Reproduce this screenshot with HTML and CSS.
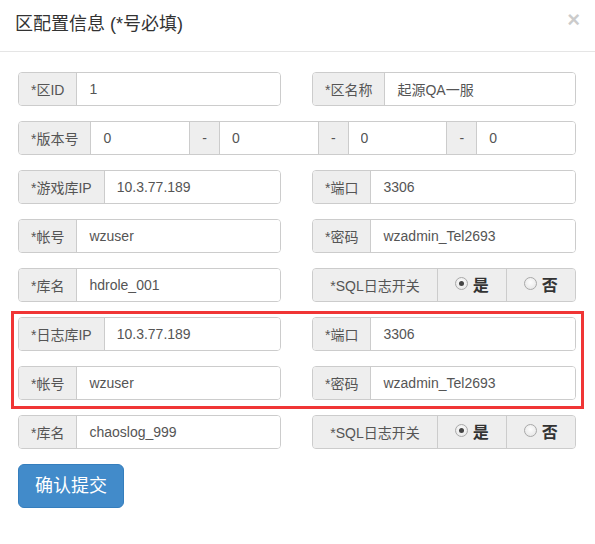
FILE: index.html
```html
<!DOCTYPE html>
<html lang="zh-CN">
<head>
<meta charset="utf-8">
<title>区配置信息</title>
<link rel="stylesheet" href="styles.css">
</head>
<body>
<div class="modal">
  <div class="modal-header">
    <h4 class="modal-title">区配置信息 (*号必填)</h4>
    <span class="close">×</span>
  </div>
  <div class="modal-body">
    <div class="form-grid">
      <div class="ig"><span class="addon">*区ID</span><input class="fc" value="1"></div>
      <div class="ig"><span class="addon">*区名称</span><input class="fc" value="起源QA一服"></div>

      <div class="ig wide">
        <span class="addon">*版本号</span><input class="fc" value="0">
        <span class="addon mid">-</span><input class="fc" value="0">
        <span class="addon mid">-</span><input class="fc" value="0">
        <span class="addon mid">-</span><input class="fc" value="0">
      </div>

      <div class="ig"><span class="addon">*游戏库IP</span><input class="fc" value="10.3.77.189"></div>
      <div class="ig"><span class="addon">*端口</span><input class="fc" value="3306"></div>

      <div class="ig"><span class="addon">*帐号</span><input class="fc" value="wzuser"></div>
      <div class="ig"><span class="addon">*密码</span><input class="fc" value="wzadmin_Tel2693"></div>

      <div class="ig"><span class="addon">*库名</span><input class="fc" value="hdrole_001"></div>
      <div class="ig radios">
        <span class="addon center">*SQL日志开关</span>
        <label class="addon center mid"><input type="radio" name="sql1" checked><b>是</b></label>
        <label class="addon center mid"><input type="radio" name="sql1"><b>否</b></label>
      </div>

      <div class="ig"><span class="addon">*日志库IP</span><input class="fc" value="10.3.77.189"></div>
      <div class="ig"><span class="addon">*端口</span><input class="fc" value="3306"></div>

      <div class="ig"><span class="addon">*帐号</span><input class="fc" value="wzuser"></div>
      <div class="ig"><span class="addon">*密码</span><input class="fc" value="wzadmin_Tel2693"></div>

      <div class="ig"><span class="addon">*库名</span><input class="fc" value="chaoslog_999"></div>
      <div class="ig radios">
        <span class="addon center">*SQL日志开关</span>
        <label class="addon center mid"><input type="radio" name="sql2" checked><b>是</b></label>
        <label class="addon center mid"><input type="radio" name="sql2"><b>否</b></label>
      </div>
    </div>
    <button class="btn-primary" type="button">确认提交</button>
  </div>
  <div class="highlight"></div>
</div>
</body>
</html>
```

FILE: styles.css
```css
* { box-sizing: border-box; }

html, body {
  margin: 0;
  padding: 0;
  background: #fff;
}

body {
  font-family: "Liberation Sans", "Noto Sans CJK SC", sans-serif;
  font-size: 14px;
  color: #333;
}

.modal {
  position: relative;
  width: 595px;
  height: 544px;
}

.modal-header {
  height: 52px;
  padding: 13px 15px 0 15px;
  border-bottom: 1px solid #e5e5e5;
  display: flex;
  justify-content: space-between;
  align-items: flex-start;
}

.modal-title {
  margin: 0;
  font-size: 18px;
  font-weight: normal;
  line-height: 22px;
  color: #333;
}

.close {
  font-size: 22px;
  font-weight: bold;
  line-height: 1;
  color: #000;
  opacity: .2;
  margin-top: -4px;
}

.modal-body {
  padding: 20px 0 0 18px;
}

.form-grid {
  width: 558px;
  display: grid;
  grid-template-columns: 263px 264px;
  column-gap: 31px;
  row-gap: 15px;
}

.ig {
  display: flex;
  height: 34px;
  border: 1px solid #ccc;
  border-radius: 4px;
  overflow: hidden;
  background: #fff;
}

.ig.wide {
  grid-column: 1 / -1;
}

.addon {
  display: flex;
  align-items: center;
  padding: 0 12px;
  background: #eee;
  color: #555;
  white-space: nowrap;
  border-right: 1px solid #ccc;
  flex: none;
}

.addon.mid {
  border-left: 1px solid #ccc;
}

.addon:last-child {
  border-right: none;
}

.fc {
  flex: 1 1 0;
  min-width: 0;
  height: 100%;
  border: none;
  outline: none;
  margin: 0;
  padding: 0 12px;
  font: inherit;
  color: #555;
  background: #fff;
}

.ig.radios {
  display: grid;
  grid-template-columns: 125px 1fr 1fr;
  background: #eee;
}

.ig.radios .addon {
  justify-content: center;
  padding: 0;
}

.ig.radios .addon.mid {
  border-left: none;
}

.ig.radios label b {
  font-size: 16px;
  font-weight: bold;
  color: #333;
  margin-left: 5px;
  margin-bottom: 3px;
}

.ig.radios input[type="radio"] {
  -webkit-appearance: none;
  appearance: none;
  width: 13px;
  height: 13px;
  margin: 0 0 4px 0;
  border-radius: 50%;
  border: 1px solid #a9a9a9;
  background: radial-gradient(circle at 50% 40%, #fdfdfd 0%, #e2e2e2 100%);
  position: relative;
}

.ig.radios input[type="radio"]:checked::after {
  content: "";
  position: absolute;
  left: 3px;
  top: 3px;
  width: 5px;
  height: 5px;
  border-radius: 50%;
  background: #444;
}

.btn-primary {
  margin-top: 15px;
  height: 44px;
  padding: 0 16px;
  font-family: inherit;
  font-size: 18px;
  line-height: 22px;
  color: #fff;
  background: #428bca;
  border: 1px solid #357ebd;
  border-radius: 6px;
}

.highlight {
  position: absolute;
  left: 11px;
  top: 311px;
  width: 573px;
  height: 98px;
  border: 3px solid #f03535;
  pointer-events: none;
}
```
